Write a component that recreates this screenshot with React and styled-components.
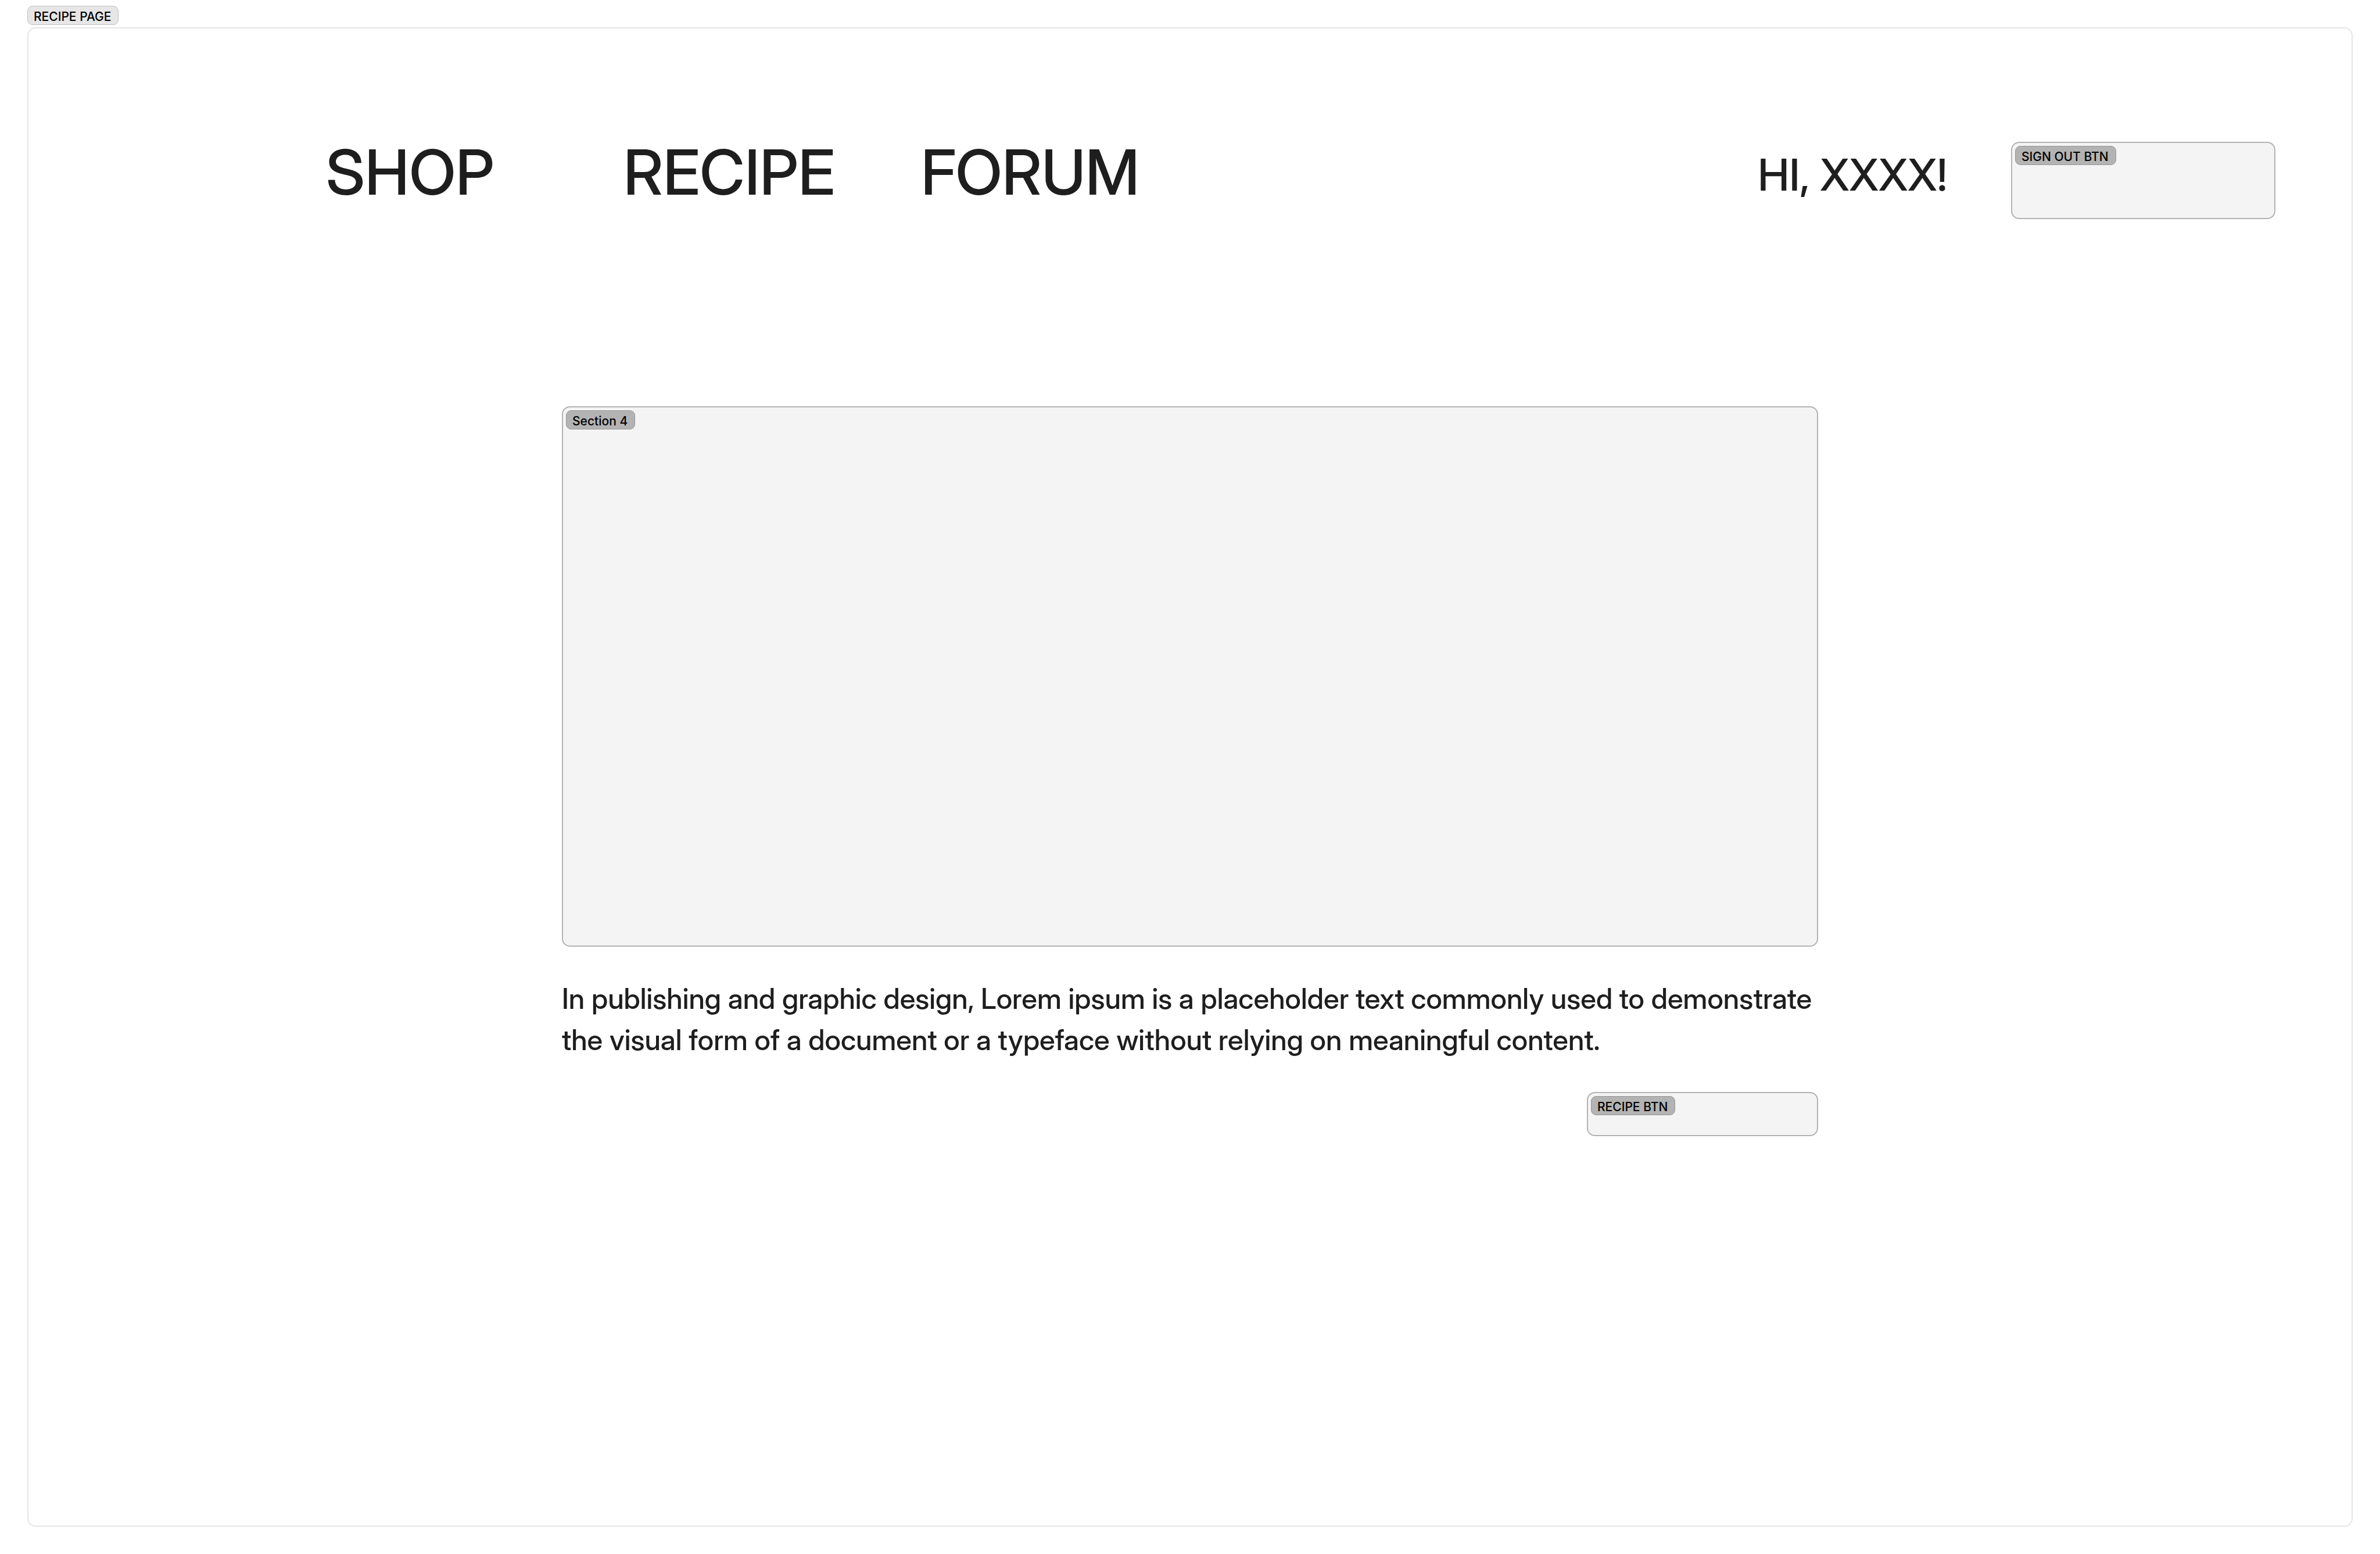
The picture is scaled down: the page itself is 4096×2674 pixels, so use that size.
import React from "react";
import styled, { createGlobalStyle } from "styled-components";

const GlobalStyle = createGlobalStyle`
  *, *::before, *::after { box-sizing: border-box; }
  body {
    margin: 0;
    background: #ffffff;
    color: #1e1e1e;
    font-family: "Inter Display", Inter, "Liberation Sans", sans-serif;
    font-weight: 500;
  }
`;

const Page = styled.div`
  display: flex;
  flex-direction: column;
  align-items: stretch;
  gap: 4px;
  min-height: 100vh;
  padding: 10px 47px 47px;
`;

const Tag = styled.span`
  display: block;
  width: fit-content;
  padding: 5px 12px 0 10px;
  border: 1px solid ${({ $light }) => ($light ? "#c2c2c2" : "#979797")};
  border-radius: 9px;
  background: ${({ $light }) => ($light ? "#e6e6e6" : "#b3b3b3")};
  color: #000000;
  font-family: Inter, "Liberation Sans", sans-serif;
  font-size: 21px;
  font-weight: 500;
  line-height: 26px;
  white-space: nowrap;
`;

const Frame = styled.div`
  flex: 1;
  border: 2px solid #e6e6e6;
  border-radius: 14px;
  background: #ffffff;
`;

const Header = styled.header`
  display: flex;
  align-items: flex-start;
  padding: 195px 131px 0 512px;
`;

const Nav = styled.nav`
  display: grid;
  grid-template-columns: repeat(3, 512px);
`;

const NavLink = styled.a`
  color: inherit;
  font-size: 107px;
  line-height: 104px;
  text-decoration: none;
`;

const Greeting = styled.p`
  margin: 0 110px 0 auto;
  font-size: 76px;
  line-height: 112px;
`;

const panel = `
  padding: 5px;
  border: 2px solid #b3b3b3;
  border-radius: 14px;
  background: #f4f4f4;
`;

const BoxButton = styled.button`
  ${panel}
  display: flex;
  align-items: flex-start;
  width: ${({ $width }) => $width}px;
  height: ${({ $height }) => $height}px;
  font-family: inherit;
  cursor: pointer;
`;

const Content = styled.main`
  display: flex;
  flex-direction: column;
  align-items: flex-end;
  gap: 54px;
  max-width: 2162px;
  margin: 322px auto 0;
`;

const Hero = styled.section`
  ${panel}
  width: 100%;
  height: 930px;
`;

const Description = styled.p`
  width: 100%;
  margin: 0;
  font-size: 49px;
  line-height: 71px;
`;

const links = ["SHOP", "RECIPE", "FORUM"];

export default function App() {
  return (
    <>
      <GlobalStyle />
      <Page>
        <Tag $light>RECIPE PAGE</Tag>
        <Frame>
          <Header>
            <Nav>
              {links.map((name) => (
                <NavLink key={name} href={`#${name.toLowerCase()}`}>
                  {name}
                </NavLink>
              ))}
            </Nav>
            <Greeting>HI, XXXX!</Greeting>
            <BoxButton type="button" $width={455} $height={133}>
              <Tag>SIGN OUT BTN</Tag>
            </BoxButton>
          </Header>
          <Content>
            <Hero>
              <Tag>Section 4</Tag>
            </Hero>
            <Description>
              In publishing and graphic design, Lorem ipsum is a placeholder
              text commonly used to demonstrate the visual form of a document
              or a typeface without relying on meaningful content.
            </Description>
            <BoxButton type="button" $width={398} $height={76}>
              <Tag>RECIPE BTN</Tag>
            </BoxButton>
          </Content>
        </Frame>
      </Page>
    </>
  );
}
